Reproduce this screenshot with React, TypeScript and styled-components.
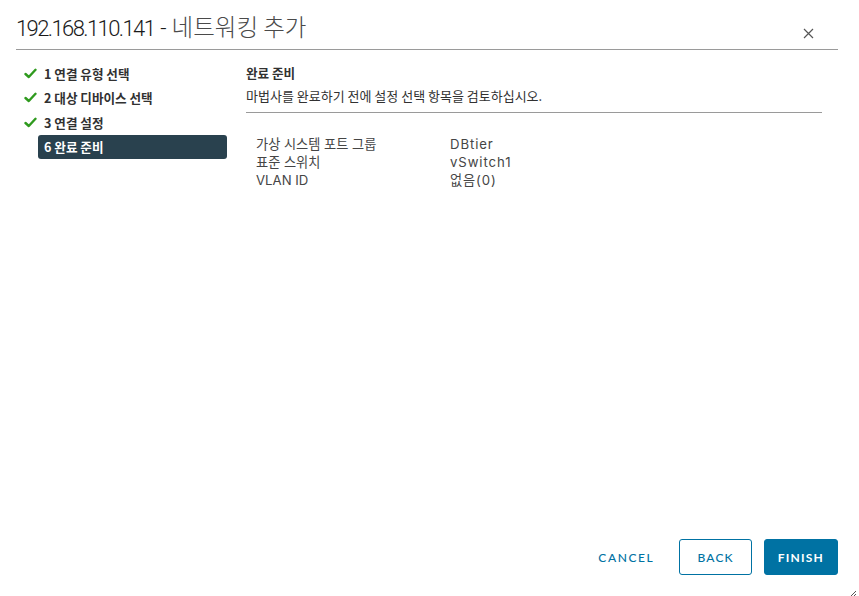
import React from 'react';
import styled, { createGlobalStyle } from 'styled-components';

const GlobalStyle = createGlobalStyle`
  html, body {
    margin: 0;
    padding: 0;
    background: #ffffff;
  }
  body {
    font-family: Lato, 'Noto Sans CJK KR', sans-serif;
    color: #313131;
  }
`;

const Dialog = styled.div`
  position: relative;
  width: 859px;
  height: 596px;
  display: flex;
  flex-direction: column;
  box-sizing: border-box;
  padding: 0 21px 0 16px;
  background: #ffffff;
`;

const Header = styled.div`
  height: 50px;
  box-sizing: border-box;
  border-bottom: 1px solid #9a9a9a;
  display: flex;
  align-items: flex-end;
  justify-content: space-between;
  padding-bottom: 6px;
`;

const Title = styled.h1`
  margin: 0;
  font-family: Roboto, 'Noto Sans CJK KR', sans-serif;
  font-weight: 300;
  font-size: 22px;
  line-height: 28px;
  color: #1a1a1a;
  display: flex;
  align-items: baseline;
`;

const TitleHost = styled.span`
  letter-spacing: -1.6px;
`;

const TitleDash = styled.span`
  margin: 0 5px 0 6px;
`;

const TitleKo = styled.span`
  font-family: 'Noto Sans CJK KR', sans-serif;
  font-size: 23.5px;
  color: #4a4a4a;
`;

const CloseButton = styled.button`
  border: none;
  background: none;
  padding: 0;
  margin: 0 23px 3px 0;
  width: 14px;
  height: 14px;
  display: flex;
  align-items: center;
  justify-content: center;
  cursor: pointer;
`;

const Body = styled.div`
  flex: 1;
  display: flex;
  padding-top: 11px;
`;

const Nav = styled.nav`
  width: 211px;
  display: flex;
  flex-direction: column;
  flex-shrink: 0;
`;

const NavItem = styled.div<{ $active?: boolean }>`
  display: flex;
  align-items: center;
  height: 24.5px;
  font-family: 'Noto Sans CJK KR', Lato, sans-serif;
  font-weight: 700;
  font-size: 12.6px;
  color: ${(p) => (p.$active ? '#ffffff' : '#313131')};
`;

const CheckSlot = styled.span`
  width: 22px;
  display: flex;
  align-items: center;
  padding-left: 8px;
  box-sizing: border-box;
`;

const NavLabel = styled.span<{ $active?: boolean }>`
  flex: 1;
  height: 24px;
  display: flex;
  align-items: center;
  padding-left: 6px;
  border-radius: 3px;
  background: ${(p) => (p.$active ? '#29414e' : 'transparent')};
`;

const Content = styled.section`
  flex: 1;
  padding-left: 19px;
  padding-right: 16px;
`;

const SectionTitle = styled.div`
  font-family: 'Noto Sans CJK KR', sans-serif;
  font-weight: 700;
  font-size: 12.6px;
  line-height: 18px;
  margin-top: 3px;
`;

const Description = styled.div`
  font-family: 'Noto Sans CJK KR', sans-serif;
  font-size: 13px;
  line-height: 18px;
  margin-top: 5px;
  padding-bottom: 7px;
  border-bottom: 1px solid #9a9a9a;
`;

const Summary = styled.div`
  display: grid;
  grid-template-columns: 194px 1fr;
  padding: 22px 0 0 10px;
  font-family: Inter, 'Noto Sans CJK KR', sans-serif;
  font-size: 13.2px;
  line-height: 18px;
  color: #454545;
`;

const Value = styled.span`
  letter-spacing: 0.9px;
`;

const Footer = styled.div`
  display: flex;
  justify-content: flex-end;
  align-items: center;
  gap: 12px;
  padding-bottom: 21px;
`;

const paddings = { flat: '12px', outline: '17px', primary: '13px' };

const Button = styled.button<{ $variant: 'flat' | 'outline' | 'primary' }>`
  height: 36px;
  box-sizing: border-box;
  padding: 0 ${(p) => paddings[p.$variant]};
  border-radius: 3px;
  font-family: Lato, sans-serif;
  font-weight: ${(p) => (p.$variant === 'primary' ? 700 : 500)};
  font-size: 12px;
  letter-spacing: ${(p) => (p.$variant === 'flat' ? '1.6px' : '1.2px')};
  text-transform: uppercase;
  cursor: pointer;
  border: 1px solid ${(p) => (p.$variant === 'flat' ? 'transparent' : '#0072a3')};
  background: ${(p) => (p.$variant === 'primary' ? '#0072a3' : 'transparent')};
  color: ${(p) => (p.$variant === 'primary' ? '#ffffff' : '#0072a3')};
`;

const ResizeHandle = styled.div`
  position: absolute;
  right: 2px;
  bottom: 2px;
  width: 10px;
  height: 10px;
`;

const Check = () => (
  <svg width="13" height="11" viewBox="0 0 13 11">
    <path d="M1.5 6 L4.8 9 L11.5 1.8" fill="none" stroke="#2f9a1e" strokeWidth="2.4" strokeLinecap="round" strokeLinejoin="round" />
  </svg>
);

const steps = [
  { label: '1 연결 유형 선택', done: true },
  { label: '2 대상 디바이스 선택', done: true },
  { label: '3 연결 설정', done: true },
  { label: '6 완료 준비', done: false, active: true },
];

const rows = [
  ['가상 시스템 포트 그룹', 'DBtier'],
  ['표준 스위치', 'vSwitch1'],
  ['VLAN ID', '없음(0)'],
];

export default function App() {
  return (
    <>
      <GlobalStyle />
      <Dialog>
        <Header>
          <Title>
            <TitleHost>192.168.110.141</TitleHost>
            <TitleDash>-</TitleDash>
            <TitleKo>네트워킹 추가</TitleKo>
          </Title>
          <CloseButton aria-label="close">
            <svg width="11" height="11" viewBox="0 0 11 11">
              <path d="M1 1 L10 10 M10 1 L1 10" stroke="#565656" strokeWidth="1.2" />
            </svg>
          </CloseButton>
        </Header>
        <Body>
          <Nav>
            {steps.map((s) => (
              <NavItem key={s.label} $active={s.active}>
                <CheckSlot>{s.done && <Check />}</CheckSlot>
                <NavLabel $active={s.active}>{s.label}</NavLabel>
              </NavItem>
            ))}
          </Nav>
          <Content>
            <SectionTitle>완료 준비</SectionTitle>
            <Description>마법사를 완료하기 전에 설정 선택 항목을 검토하십시오.</Description>
            <Summary>
              {rows.map(([k, v]) => (
                <React.Fragment key={k}>
                  <span>{k}</span>
                  <Value>{v}</Value>
                </React.Fragment>
              ))}
            </Summary>
          </Content>
        </Body>
        <Footer>
          <Button $variant="flat">Cancel</Button>
          <Button $variant="outline">Back</Button>
          <Button $variant="primary">Finish</Button>
        </Footer>
        <ResizeHandle>
          <svg width="10" height="10" viewBox="0 0 10 10">
            <path d="M9 1 L1 9 M9 4 L4 9 M9 7 L7 9" stroke="#555" strokeWidth="1" />
          </svg>
        </ResizeHandle>
      </Dialog>
    </>
  );
}
